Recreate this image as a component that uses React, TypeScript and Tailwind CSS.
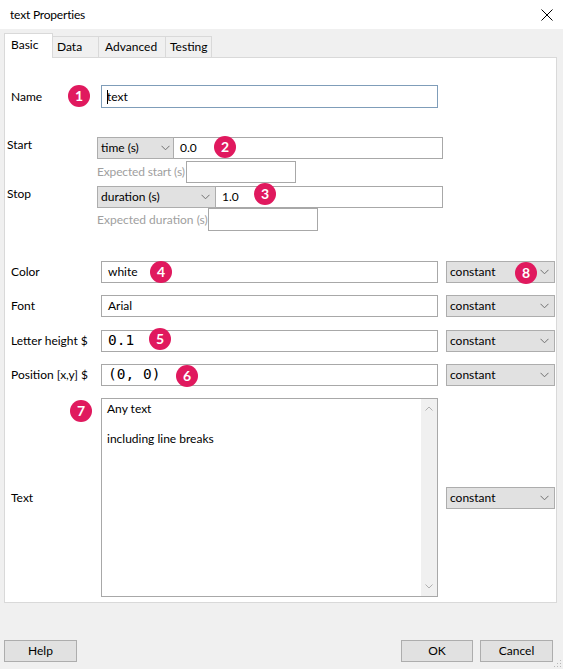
import React from "react";

function Badge({ n, cls }: { n: string; cls: string }) {
  return (
    <div
      className={`absolute ${cls} w-[22px] h-[22px] rounded-full bg-[#e0195e] text-white flex items-center justify-center text-[14px] font-bold leading-none z-10`}
    >
      {n}
    </div>
  );
}

function Chevron({ cls }: { cls: string }) {
  return (
    <svg className={`absolute ${cls}`} width="9" height="6" viewBox="0 0 9 6">
      <polyline points="0.5,0.8 4.5,4.8 8.5,0.8" fill="none" stroke="#707070" strokeWidth="1" />
    </svg>
  );
}

function Select({ label, w, h, chev }: { label: string; w: string; h: string; chev: string }) {
  return (
    <div className={`relative ${w} ${h} shrink-0 bg-[#e1e1e1] border border-[#adadad] flex items-center pl-[3px] text-[12px] text-black`}>
      {label}
      <Chevron cls={chev} />
    </div>
  );
}

function Input({ w, h, children, cls = "" }: { w: string; h: string; children?: React.ReactNode; cls?: string }) {
  return (
    <div className={`${w} ${h} shrink-0 bg-white border border-[#a8a8a8] flex items-center pl-[6px] text-[12px] text-black ${cls}`}>
      {children}
    </div>
  );
}

export default function App() {
  return (
    <div className="w-[563px] h-[669px] bg-[#f0f0f0] flex flex-col relative overflow-hidden font-['Lato','Noto_Sans',sans-serif] text-[12px] text-black">
      {/* Title bar */}
      <div className="h-[29px] bg-white flex items-center justify-between pl-[10px] pr-[10px] shrink-0">
        <span className="text-[12px] tracking-[-0.2px]">text Properties</span>
        <svg width="12" height="12" viewBox="0 0 12 12">
          <line x1="0.5" y1="0.5" x2="11.5" y2="11.5" stroke="#000" strokeWidth="1" />
          <line x1="11.5" y1="0.5" x2="0.5" y2="11.5" stroke="#000" strokeWidth="1" />
        </svg>
      </div>

      {/* Tabs */}
      <div className="h-[28px] flex items-end pl-[4px] shrink-0 relative z-10">
        <div className="w-[49px] h-[25px] -mb-px bg-white border-t border-l border-r border-[#d9d9d9] flex items-start pt-[2px] pl-[6px] text-[12px]">
          Basic
        </div>
        <div className="w-[46px] h-[21px] bg-[#f0f0f0] border-t border-r border-[#d9d9d9] flex items-center pl-[4px]">
          Data
        </div>
        <div className="w-[67px] h-[21px] bg-[#f0f0f0] border-t border-r border-[#d9d9d9] flex items-center pl-[6px]">
          Advanced
        </div>
        <div className="w-[46px] h-[21px] bg-[#f0f0f0] border-t border-r border-[#d9d9d9] flex items-center pl-[4px]">
          Testing
        </div>
      </div>

      {/* Panel */}
      <div className="ml-[4px] w-[553px] h-[546px] bg-white border border-[#d9d9d9] flex flex-col shrink-0">
        {/* Name */}
        <div className="relative flex items-center mt-[27px] h-[23px]">
          <div className="w-[96px] pl-[6px]">Name</div>
          <div className="w-[337px] h-[23px] bg-white border border-[#7f9db9] flex items-center pl-[5px] relative">
            <span className="w-px h-[14px] bg-black mr-[-1px]" />
            <span>text</span>
          </div>
          <Badge n="1" cls="left-[63px] top-[0px]" />
        </div>

        {/* Start */}
        <div className="relative flex items-start mt-[29px] h-[22px]">
          <div className="w-[92px] pl-[2px] leading-[16px]">Start</div>
          <Select label="time (s)" w="w-[77px]" h="h-[22px]" chev="right-[3px] top-[7px]" />
          <Input w="w-[269px]" h="h-[22px]" cls="border-l-0">0.0</Input>
          <Badge n="2" cls="left-[209px] top-[-1px]" />
        </div>

        {/* Expected start */}
        <div className="flex items-center mt-[2px] h-[22px]">
          <div className="w-[92px] shrink-0" />
          <div className="w-[89px] shrink-0 text-[#a0a0a0] whitespace-nowrap tracking-[-0.15px]">Expected start (s)</div>
          <Input w="w-[110px]" h="h-[22px]" />
        </div>

        {/* Stop */}
        <div className="relative flex items-start mt-[3px] h-[22px]">
          <div className="w-[92px] pl-[2px] leading-[16px]">Stop</div>
          <Select label="duration (s)" w="w-[119px]" h="h-[22px]" chev="right-[5px] top-[7px]" />
          <Input w="w-[227px]" h="h-[22px]" cls="border-l-0">1.0</Input>
          <Badge n="3" cls="left-[249px] top-[-3px]" />
        </div>

        {/* Expected duration */}
        <div className="flex items-center mt-[0px] h-[23px]">
          <div className="w-[92px] shrink-0" />
          <div className="w-[111px] shrink-0 text-[#a0a0a0] whitespace-nowrap">Expected duration (s)</div>
          <Input w="w-[110px]" h="h-[23px]" />
        </div>

        {/* Color */}
        <div className="relative flex items-center mt-[30px] h-[22px]">
          <div className="w-[96px] pl-[6px]">Color</div>
          <Input w="w-[337px]" h="h-[22px]">white</Input>
          <div className="w-[8px]" />
          <Select label="constant" w="w-[109px]" h="h-[22px]" chev="right-[5px] top-[7px]" />
          <Badge n="4" cls="left-[145px] top-[0px]" />
          <Badge n="8" cls="left-[510px] top-[1px]" />
        </div>

        {/* Font */}
        <div className="relative flex items-center mt-[12px] h-[22px]">
          <div className="w-[96px] pl-[6px]">Font</div>
          <Input w="w-[337px]" h="h-[22px]">Arial</Input>
          <div className="w-[8px]" />
          <Select label="constant" w="w-[109px]" h="h-[22px]" chev="right-[5px] top-[7px]" />
        </div>

        {/* Letter height */}
        <div className="relative flex items-center mt-[13px] h-[22px]">
          <div className="w-[96px] pl-[6px] whitespace-nowrap">Letter height $</div>
          <Input w="w-[337px]" h="h-[22px]" cls="font-['DejaVu_Sans_Mono',monospace] text-[14.5px] text-[#111] pl-[6px]">0.1</Input>
          <div className="w-[8px]" />
          <Select label="constant" w="w-[109px]" h="h-[22px]" chev="right-[5px] top-[7px]" />
          <Badge n="5" cls="left-[144px] top-[-2px]" />
        </div>

        {/* Position */}
        <div className="relative flex items-center mt-[12px] h-[22px]">
          <div className="w-[96px] pl-[6px] whitespace-nowrap">Position [x,y] $</div>
          <Input w="w-[337px]" h="h-[22px]" cls="font-['DejaVu_Sans_Mono',monospace] text-[14.5px] text-[#111] pl-[6px] whitespace-pre">(0, 0)</Input>
          <div className="w-[8px]" />
          <Select label="constant" w="w-[109px]" h="h-[22px]" chev="right-[5px] top-[7px]" />
          <Badge n="6" cls="left-[171px] top-[1px]" />
        </div>

        {/* Text */}
        <div className="relative flex items-center mt-[12px] h-[199px]">
          <div className="w-[96px] pl-[6px]">Text</div>
          <div className="w-[337px] h-[199px] bg-white border border-[#a8a8a8] flex shrink-0">
            <div className="flex-1 flex flex-col pl-[5px] pt-[2px] leading-[16px]">
              <div>Any text</div>
              <div className="mt-[14px]">including line breaks</div>
            </div>
            <div className="w-[16px] h-full bg-[#f0f0f0] flex flex-col items-center justify-between py-[7px]">
              <svg width="8" height="5" viewBox="0 0 8 5">
                <polyline points="0.5,4.5 4,1 7.5,4.5" fill="none" stroke="#b0b0b0" strokeWidth="1" />
              </svg>
              <svg width="8" height="5" viewBox="0 0 8 5">
                <polyline points="0.5,0.5 4,4 7.5,0.5" fill="none" stroke="#b0b0b0" strokeWidth="1" />
              </svg>
            </div>
          </div>
          <div className="w-[8px]" />
          <Select label="constant" w="w-[109px]" h="h-[22px]" chev="right-[5px] top-[7px]" />
          <Badge n="7" cls="left-[65px] top-[2px]" />
        </div>
      </div>

      {/* Buttons */}
      <div className="flex justify-between items-center mt-[37px] pl-[4px] pr-[10px] h-[22px] shrink-0">
        <div className="w-[73px] h-[22px] bg-[#e1e1e1] border border-[#adadad] flex items-center justify-center">Help</div>
        <div className="flex gap-[7px]">
          <div className="w-[72px] h-[22px] bg-[#e1e1e1] border border-[#adadad] flex items-center justify-center">OK</div>
          <div className="w-[73px] h-[22px] bg-[#e1e1e1] border border-[#adadad] flex items-center justify-center">Cancel</div>
        </div>
      </div>

      {/* resize grip */}
      <svg className="absolute right-[1px] bottom-[1px]" width="8" height="8" viewBox="0 0 8 8">
        <rect x="6" y="0" width="1" height="1" fill="#b8b8b8" />
        <rect x="3" y="3" width="1" height="1" fill="#b8b8b8" />
        <rect x="6" y="3" width="1" height="1" fill="#b8b8b8" />
        <rect x="0" y="6" width="1" height="1" fill="#b8b8b8" />
        <rect x="3" y="6" width="1" height="1" fill="#b8b8b8" />
        <rect x="6" y="6" width="1" height="1" fill="#b8b8b8" />
      </svg>
    </div>
  );
}
